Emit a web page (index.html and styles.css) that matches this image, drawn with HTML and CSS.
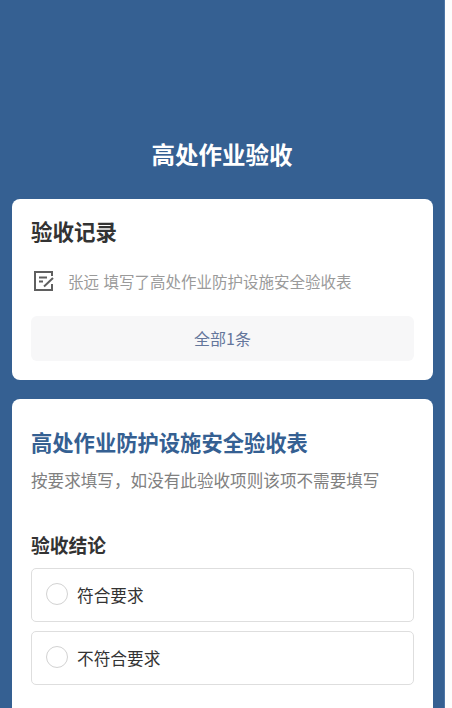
FILE: index.html
```html
<!DOCTYPE html>
<html lang="zh-CN">
<head>
<meta charset="utf-8">
<title>高处作业验收</title>
<link rel="stylesheet" href="styles.css">
</head>
<body>
<main class="page">
  <h1 class="page-title">高处作业验收</h1>
  <section class="card card-records">
    <h2 class="card-heading">验收记录</h2>
    <div class="record">
      <svg class="record-icon" viewBox="0 0 22 22" width="22" height="22" aria-hidden="true">
        <path d="M19 6V2H2v18h17v-6" fill="none" stroke="#5f5f5f" stroke-width="2"/>
        <path d="M6 7.500h8M6 11.500h4" fill="none" stroke="#5f5f5f" stroke-width="1.800"/>
        <path d="M11 16.500 20 8" fill="none" stroke="#5f5f5f" stroke-width="2"/>
      </svg>
      <span class="record-text">张远 填写了高处作业防护设施安全验收表</span>
    </div>
    <div class="all-link">全部1条</div>
  </section>
  <section class="card card-form">
    <h2 class="form-title">高处作业防护设施安全验收表</h2>
    <p class="form-hint">按要求填写，如没有此验收项则该项不需要填写</p>
    <h3 class="section-label">验收结论</h3>
    <div class="option"><span class="radio"></span><span class="option-text">符合要求</span></div>
    <div class="option"><span class="radio"></span><span class="option-text">不符合要求</span></div>
  </section>
</main>
</body>
</html>
```
FILE: styles.css
```css
* { box-sizing: border-box; }
html, body {
  margin: 0;
  padding: 0;
  height: 708px;
  overflow: hidden;
  background: #fdfdfd;
  font-family: "Noto Sans CJK SC", "Noto Sans", sans-serif;
}
.page {
  width: 445px;
  height: 708px;
  overflow: hidden;
  padding: 137px 12px 0;
  background: #356092;
  border-right: 1px solid #4d76a6;
}
.page-title {
  margin: 0 0 28px;
  height: 34px;
  line-height: 34px;
  font-size: 23.500px;
  font-weight: 700;
  color: #fff;
  text-align: center;
}
.card {
  width: 421px;
  background: #fff;
  border-radius: 8px;
  padding: 0 19px;
}
.card-records {
  height: 181px;
  padding-top: 17px;
  margin-bottom: 19px;
}
.card-heading {
  margin: 0;
  height: 30px;
  line-height: 30px;
  font-size: 21.500px;
  font-weight: 700;
  color: #333;
}
.record {
  display: flex;
  align-items: center;
  gap: 13px;
  height: 34px;
  margin-top: 18px;
  padding-left: 2px;
}
.record-icon { flex: none; }
.record-text {
  font-size: 15.500px;
  word-spacing: 1px;
  color: #9a9a9a;
  white-space: nowrap;
}
.all-link {
  height: 45px;
  margin-top: 18px;
  line-height: 45px;
  text-align: center;
  background: #f7f7f8;
  border-radius: 6px;
  font-size: 16px;
  color: #64769b;
}
.card-form {
  height: 340px;
  padding-top: 27px;
}
.form-title {
  margin: 0;
  height: 32px;
  line-height: 32px;
  font-size: 21.300px;
  font-weight: 700;
  color: #356092;
}
.form-hint {
  margin: 8px 0 0;
  height: 28px;
  line-height: 28px;
  font-size: 16.600px;
  color: #808080;
  white-space: nowrap;
}
.section-label {
  margin: 37px 0 9px;
  height: 28px;
  line-height: 28px;
  font-size: 18.800px;
  font-weight: 700;
  color: #333;
}
.option {
  display: flex;
  align-items: center;
  gap: 9px;
  height: 54px;
  margin-bottom: 9px;
  padding: 0 14px;
  border: 1.500px solid #dedede;
  border-radius: 5px;
}
.radio {
  flex: none;
  width: 22px;
  height: 22px;
  margin-top: -3px;
  border: 1.500px solid #d2d2d2;
  border-radius: 50%;
}
.option-text {
  font-size: 16.700px;
  color: #333;
}
```
